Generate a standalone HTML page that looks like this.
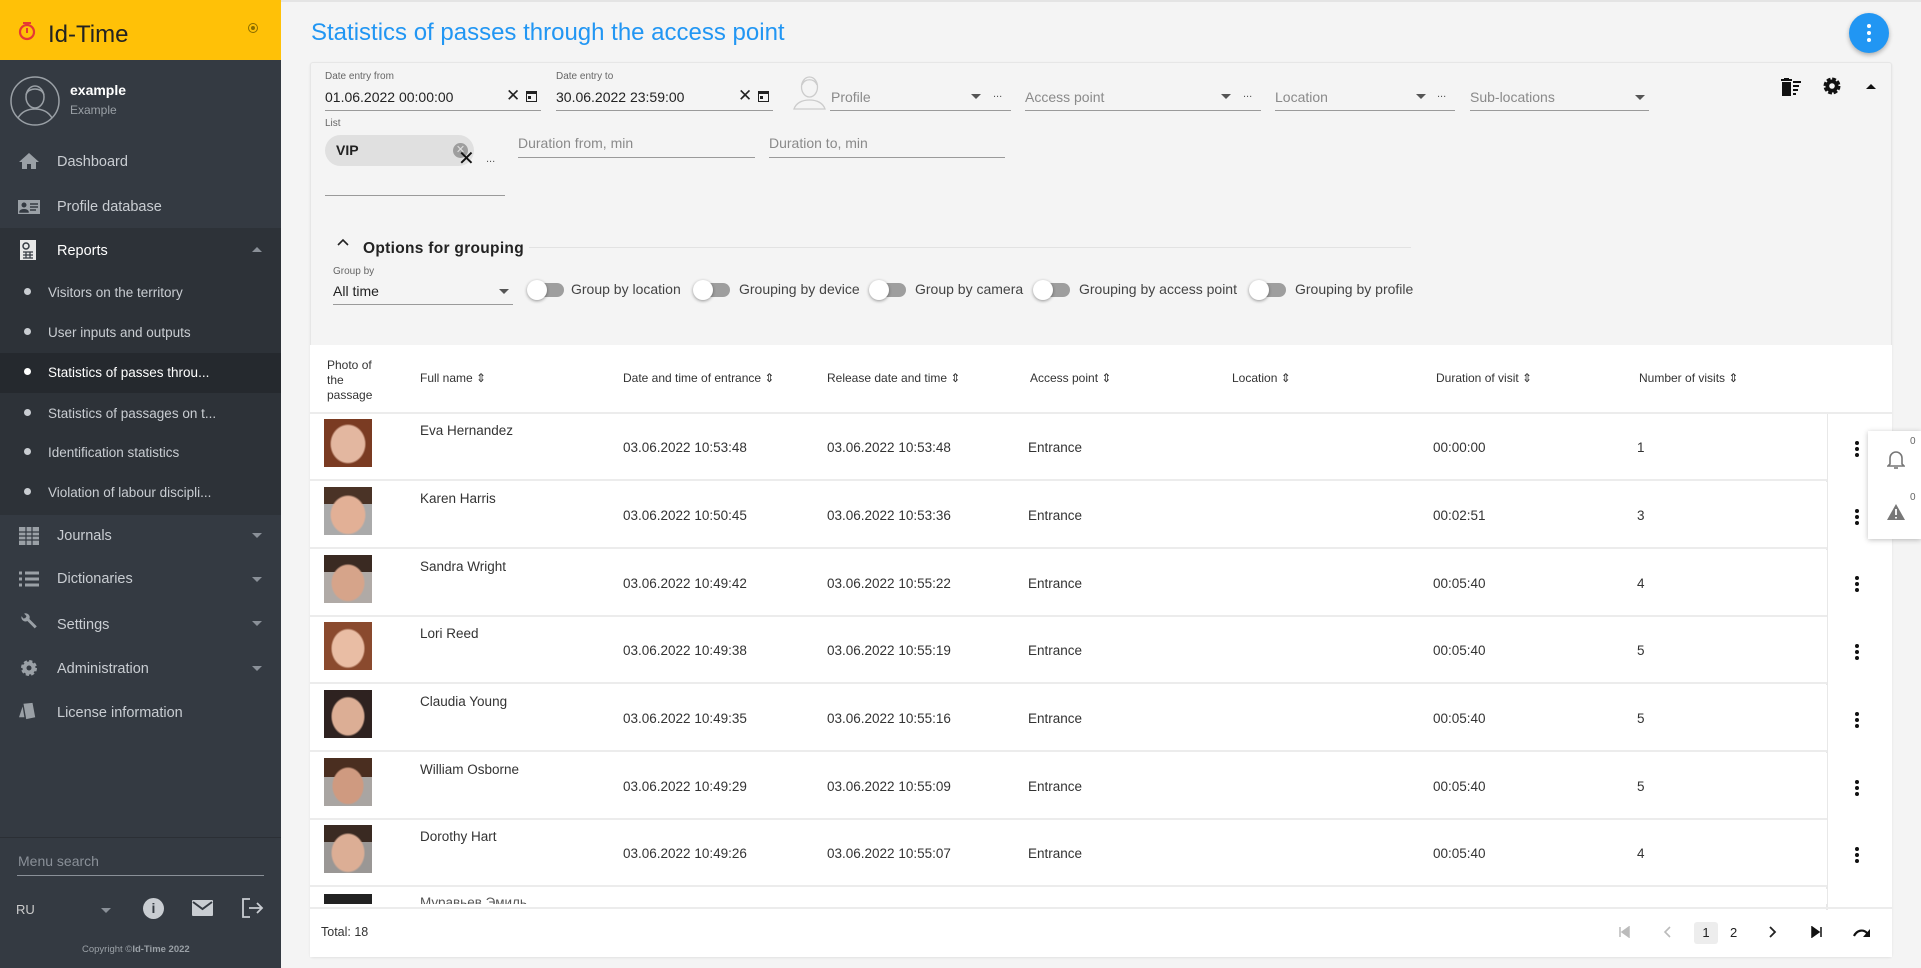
<!DOCTYPE html>
<html><head><meta charset="utf-8">
<style>
*{box-sizing:border-box;margin:0;padding:0}
body{width:1921px;height:968px;overflow:hidden;background:#f4f4f4;font-family:"Liberation Sans",Arial,sans-serif;position:relative;color:#333}
.a{position:absolute;white-space:nowrap}
#sb{position:absolute;left:0;top:0;width:281px;height:968px;background:#343a42}
.mi{position:absolute;left:57px;font-size:14.5px;color:#c9cdd2}
.si{position:absolute;left:48px;font-size:13.5px;color:#c9cdd2}
.dot{position:absolute;left:24px;width:7px;height:7px;border-radius:50%;background:#c9cdd2}
.car{position:absolute;left:252px;width:0;height:0;border-left:5px solid transparent;border-right:5px solid transparent;border-top:5px solid #8a9098}
.ic{position:absolute;left:18px;width:22px;height:18px}
.lbl{font-size:10px;color:#666}
.val{font-size:14px;color:#222}
.ph{font-size:14px;color:#8a8a8a}
.ul{position:absolute;height:1px;background:#9a9a9a}
.arr{position:absolute;width:0;height:0;border-left:5px solid transparent;border-right:5px solid transparent;border-top:5px solid #555}
.tg{position:absolute;width:34px;height:14px;border-radius:7px;background:#9e9e9e}
.tg:after{content:"";position:absolute;left:-3px;top:-3px;width:20px;height:20px;border-radius:50%;background:#fff;box-shadow:0 1px 3px rgba(0,0,0,.4)}
.tl{font-size:14px;color:#444}
.th{position:absolute;font-size:12px;color:#333;top:371px}
.row{position:absolute;left:310px;width:1517px;height:67px;border-bottom:2px solid #ececec;background:#fff}
.c{position:absolute;font-size:13.5px;color:#333}
.pic{position:absolute;left:14px;top:5px;width:48px;height:48px}
.kd{position:absolute;left:1855px;width:4px}
.kd i{display:block;width:4px;height:4px;border-radius:50%;background:#111;margin-bottom:2px}
</style></head><body>

<div id="sb">
 <div class="a" style="left:0;top:0;width:281px;height:60px;background:#ffc107"></div>
 <svg class="a" style="left:17px;top:20px" width="20" height="22" viewBox="0 0 20 22"><circle cx="10" cy="12" r="7" fill="none" stroke="#e53935" stroke-width="2.2"/><path d="M6 3h8M10 8v5" stroke="#e53935" stroke-width="2"/></svg>
 <div class="a" style="left:48px;top:21px;font-size:24px;color:#222">Id-Time</div>
 <div class="a" style="left:248px;top:23px;width:10px;height:10px;border-radius:50%;border:1.5px solid #8a6d00"></div>
 <div class="a" style="left:251px;top:26px;width:4px;height:4px;border-radius:50%;background:#8a6d00"></div>
 <svg class="a" style="left:9px;top:75px" width="52" height="52" viewBox="0 0 52 52"><circle cx="26" cy="26" r="24" fill="none" stroke="#9aa0a6" stroke-width="1.5"/><ellipse cx="26" cy="22" rx="9" ry="11" fill="none" stroke="#9aa0a6" stroke-width="1.5"/><path d="M17 20c2-8 16-8 18 0M9 43c4-7 10-9 17-9s13 2 17 9" fill="none" stroke="#9aa0a6" stroke-width="1.5"/></svg>
 <div class="a" style="left:70px;top:82px;font-size:14px;font-weight:bold;color:#fff">example</div>
 <div class="a" style="left:70px;top:103px;font-size:12px;color:#9aa0a6">Example</div>

 <svg class="ic" style="top:152px" viewBox="0 0 22 18"><path d="M11 1L1 10h3v7h5v-5h4v5h5v-7h3z" fill="#9aa0a6"/></svg>
 <div class="mi" style="top:154px">Dashboard</div>
 <svg class="ic" style="top:198px" viewBox="0 0 22 18"><rect x="0" y="2" width="22" height="14" fill="#9aa0a6"/><circle cx="6" cy="7" r="2.5" fill="#343a42"/><path d="M2 14c0-3 8-3 8 0zM12 6h8M12 9h8M12 12h6" stroke="#343a42" stroke-width="1.5" fill="#343a42"/></svg>
 <div class="mi" style="top:199px">Profile database</div>

 <div class="a" style="left:0;top:228px;width:281px;height:287px;background:#2d3238"></div>
 <div class="a" style="left:0;top:353px;width:281px;height:40px;background:#25292e"></div>
 <svg class="ic" style="top:240px;left:20px;width:16px;height:20px" viewBox="0 0 16 20"><rect x="0" y="0" width="16" height="20" fill="#e8e8e8"/><circle cx="6" cy="6" r="3" fill="none" stroke="#343a42" stroke-width="1.5"/><path d="M3 12h10M3 15h10M3 18h10M6 12v6M10 12v6" stroke="#343a42" stroke-width="1.2"/></svg>
 <div class="mi" style="top:243px;color:#fff">Reports</div>
 <div class="a" style="left:252px;top:247px;border-left:5px solid transparent;border-right:5px solid transparent;border-bottom:5px solid #8a9098"></div>
 <div class="dot" style="top:288px"></div><div class="si" style="top:285px">Visitors on the territory</div>
 <div class="dot" style="top:328px"></div><div class="si" style="top:325px">User inputs and outputs</div>
 <div class="dot" style="top:368px;background:#fff"></div><div class="si" style="top:365px;color:#fff">Statistics of passes throu...</div>
 <div class="dot" style="top:409px"></div><div class="si" style="top:406px">Statistics of passages on t...</div>
 <div class="dot" style="top:448px"></div><div class="si" style="top:445px">Identification statistics</div>
 <div class="dot" style="top:488px"></div><div class="si" style="top:485px">Violation of labour discipli...</div>

 <svg class="ic" style="top:527px;left:19px;width:20px" viewBox="0 0 20 18"><rect width="20" height="18" fill="#9aa0a6"/><path d="M0 5h20M0 9h20M0 13h20M7 0v18M13 0v18" stroke="#343a42" stroke-width="1.2"/></svg>
 <div class="mi" style="top:528px">Journals</div><div class="car" style="top:533px"></div>
 <svg class="ic" style="top:570px;left:19px;width:20px" viewBox="0 0 20 18"><path d="M0 3h3M6 3h14M0 9h3M6 9h14M0 15h3M6 15h14" stroke="#9aa0a6" stroke-width="3"/></svg>
 <div class="mi" style="top:571px">Dictionaries</div><div class="car" style="top:577px"></div>
 <svg class="ic" style="top:612px;left:18px" viewBox="0 0 22 22"><path d="M2 5a5 5 0 007 6l9 9 2.5-2.5-9-9A5 5 0 005 2l3 3-1.5 2.5L4 8z" fill="#9aa0a6"/></svg>
 <div class="mi" style="top:617px">Settings</div><div class="car" style="top:621px"></div>
 <svg class="ic" style="top:659px;left:20px;width:18px" viewBox="0 0 18 18"><circle cx="9" cy="9" r="6.5" fill="#9aa0a6" stroke="#9aa0a6" stroke-width="3" stroke-dasharray="3 2.1"/><circle cx="9" cy="9" r="2.5" fill="#343a42"/></svg>
 <div class="mi" style="top:661px">Administration</div><div class="car" style="top:666px"></div>
 <svg class="ic" style="top:702px;left:17px" viewBox="0 0 22 20"><path d="M6 2l10-1 3 16-10 2z" fill="#9aa0a6"/><path d="M1 17l4-12 2 12z" fill="#9aa0a6"/></svg>
 <div class="mi" style="top:705px">License information</div>

 <div class="a" style="left:0;top:837px;width:281px;height:1px;background:#2b2f35"></div>
 <div class="a" style="left:18px;top:853px;font-size:14px;color:#8a9098">Menu search</div>
 <div class="a" style="left:17px;top:875px;width:247px;height:1px;background:#8a9098"></div>
 <div class="a" style="left:16px;top:902px;font-size:13px;color:#ccc">RU</div>
 <div class="car" style="left:101px;top:908px"></div>
 <div class="a" style="left:143px;top:898px;width:21px;height:21px;border-radius:50%;background:#c9cdd2;color:#343a42;font-weight:bold;font-size:14px;text-align:center;line-height:21px">i</div>
 <svg class="a" style="left:192px;top:900px" width="21" height="16" viewBox="0 0 21 16"><rect width="21" height="16" rx="1" fill="#c9cdd2"/><path d="M1 2l9.5 7L20 2" stroke="#343a42" stroke-width="2" fill="none"/></svg>
 <svg class="a" style="left:242px;top:898px" width="22" height="20" viewBox="0 0 22 20"><path d="M8 1H1v18h7M7 10h13M15 5l5 5-5 5" stroke="#c9cdd2" stroke-width="1.8" fill="none"/></svg>
 <div class="a" style="left:82px;top:944px;font-size:9.5px;color:#9aa0a6">Copyright ©<b>Id-Time 2022</b></div>
</div>

<div class="a" style="left:281px;top:0;width:1640px;height:2px;background:#e4e4e4"></div>
<div class="a" style="left:311px;top:19px;font-size:24px;color:#2196f3">Statistics of passes through the access point</div>
<div class="a" style="left:1849px;top:13px;width:40px;height:40px;border-radius:50%;background:#2196f3;box-shadow:0 2px 5px rgba(0,0,0,.3)"></div>
<div class="a" style="left:1867px;top:24px;width:4px"><i style="display:block;width:4px;height:4px;border-radius:50%;background:#fff;margin-bottom:3px"></i><i style="display:block;width:4px;height:4px;border-radius:50%;background:#fff;margin-bottom:3px"></i><i style="display:block;width:4px;height:4px;border-radius:50%;background:#fff"></i></div>

<div class="a" style="left:310px;top:62px;width:1582px;height:895px;border:1px solid #e6e6e6;border-radius:3px;box-shadow:0 1px 2px rgba(0,0,0,.08)"></div>

<div class="a lbl" style="left:325px;top:71px">Date entry from</div>
<div class="a val" style="left:325px;top:89px">01.06.2022 00:00:00</div>
<div class="a" style="left:506px;top:86px;font-size:17px;color:#222">✕</div>
<svg class="a" style="left:526px;top:90px" width="11" height="12" viewBox="0 0 11 12"><rect x=".5" y="1.5" width="10" height="10" fill="none" stroke="#222"/><rect x="0" y="1" width="11" height="3" fill="#222"/><rect x="2" y="6" width="3" height="3" fill="#222"/></svg>
<div class="ul" style="left:325px;top:110px;width:216px"></div>
<div class="a lbl" style="left:556px;top:71px">Date entry to</div>
<div class="a val" style="left:556px;top:89px">30.06.2022 23:59:00</div>
<div class="a" style="left:738px;top:86px;font-size:17px;color:#222">✕</div>
<svg class="a" style="left:758px;top:90px" width="11" height="12" viewBox="0 0 11 12"><rect x=".5" y="1.5" width="10" height="10" fill="none" stroke="#222"/><rect x="0" y="1" width="11" height="3" fill="#222"/><rect x="2" y="6" width="3" height="3" fill="#222"/></svg>
<div class="ul" style="left:556px;top:110px;width:217px"></div>

<svg class="a" style="left:792px;top:74px" width="35" height="36" viewBox="0 0 35 36"><ellipse cx="17.5" cy="13" rx="8" ry="10" fill="none" stroke="#ccc" stroke-width="1.3"/><path d="M10 11c2-7 13-7 15 0M2 35c2-6 8-9 15.5-9S31 29 33 35z" fill="none" stroke="#ccc" stroke-width="1.3"/></svg>
<div class="a ph" style="left:831px;top:89px">Profile</div>
<div class="arr" style="left:971px;top:94px"></div>
<div class="a" style="left:993px;top:88px;font-size:11px;color:#555">...</div>
<div class="ul" style="left:830px;top:110px;width:181px"></div>
<div class="a ph" style="left:1025px;top:89px">Access point</div>
<div class="arr" style="left:1221px;top:94px"></div>
<div class="a" style="left:1243px;top:88px;font-size:11px;color:#555">...</div>
<div class="ul" style="left:1025px;top:110px;width:236px"></div>
<div class="a ph" style="left:1275px;top:89px">Location</div>
<div class="arr" style="left:1416px;top:94px"></div>
<div class="a" style="left:1437px;top:88px;font-size:11px;color:#555">...</div>
<div class="ul" style="left:1275px;top:110px;width:180px"></div>
<div class="a ph" style="left:1470px;top:89px">Sub-locations</div>
<div class="arr" style="left:1635px;top:95px"></div>
<div class="ul" style="left:1470px;top:110px;width:179px"></div>

<svg class="a" style="left:1781px;top:78px" width="20" height="18" viewBox="0 0 20 18"><rect x="1" y="4" width="9" height="14" fill="#111"/><rect x="0" y="1" width="11" height="2" fill="#111"/><rect x="3" y="0" width="5" height="2" fill="#111"/><path d="M12 4h8M12 8h6M12 12h5M12 16h3" stroke="#111" stroke-width="2"/></svg>
<svg class="a" style="left:1822px;top:76px" width="20" height="20" viewBox="0 0 20 20"><circle cx="10" cy="10" r="6.5" fill="#111" stroke="#111" stroke-width="4" stroke-dasharray="3.5 1.6"/><circle cx="10" cy="10" r="2.8" fill="#f4f4f4"/></svg>
<div class="a" style="left:1866px;top:84px;border-left:5px solid transparent;border-right:5px solid transparent;border-bottom:5px solid #111"></div>

<div class="a lbl" style="left:325px;top:118px">List</div>
<div class="a" style="left:325px;top:135px;width:149px;height:31px;border-radius:16px;background:#e0e0e0"></div>
<div class="a" style="left:336px;top:142px;font-size:14px;font-weight:bold;color:#222">VIP</div>
<div class="a" style="left:453px;top:143px;width:15px;height:15px;border-radius:50%;background:#9e9e9e;color:#e0e0e0;font-size:11px;text-align:center;line-height:15px">✕</div>
<div class="a" style="left:458px;top:146px;font-size:20px;color:#111">✕</div>
<div class="a" style="left:486px;top:153px;font-size:11px;color:#555">...</div>
<div class="ul" style="left:325px;top:195px;width:180px"></div>
<div class="a ph" style="left:518px;top:135px">Duration from, min</div>
<div class="ul" style="left:518px;top:157px;width:237px"></div>
<div class="a ph" style="left:769px;top:135px">Duration to, min</div>
<div class="ul" style="left:769px;top:157px;width:236px"></div>

<svg class="a" style="left:337px;top:238px" width="12" height="8" viewBox="0 0 12 8"><path d="M1 7l5-5 5 5" stroke="#222" stroke-width="1.6" fill="none"/></svg>
<div class="a" style="left:363px;top:240px;font-size:15.5px;font-weight:bold;color:#222;letter-spacing:.3px">Options for grouping</div>
<div class="a" style="left:529px;top:247px;width:882px;height:1px;background:#e2e2e2"></div>
<div class="a lbl" style="left:333px;top:266px">Group by</div>
<div class="a val" style="left:333px;top:283px">All time</div>
<div class="arr" style="left:499px;top:289px"></div>
<div class="ul" style="left:333px;top:304px;width:180px"></div>
<div class="tg" style="left:530px;top:283px"></div><div class="a tl" style="left:571px;top:281px">Group by location</div>
<div class="tg" style="left:696px;top:283px"></div><div class="a tl" style="left:739px;top:281px">Grouping by device</div>
<div class="tg" style="left:872px;top:283px"></div><div class="a tl" style="left:915px;top:281px">Group by camera</div>
<div class="tg" style="left:1036px;top:283px"></div><div class="a tl" style="left:1079px;top:281px">Grouping by access point</div>
<div class="tg" style="left:1252px;top:283px"></div><div class="a tl" style="left:1295px;top:281px">Grouping by profile</div>

<div class="a" style="left:310px;top:345px;width:1582px;height:612px;background:#fff"></div>
<div class="a" style="left:310px;top:412px;width:1582px;height:2px;background:#ececec"></div>
<div class="a" style="left:327px;top:358px;font-size:12px;color:#333;line-height:15px;white-space:normal;width:60px">Photo of the passage</div>
<div class="th" style="left:420px">Full name ⇕</div>
<div class="th" style="left:623px">Date and time of entrance ⇕</div>
<div class="th" style="left:827px">Release date and time ⇕</div>
<div class="th" style="left:1030px">Access point ⇕</div>
<div class="th" style="left:1232px">Location ⇕</div>
<div class="th" style="left:1436px">Duration of visit ⇕</div>
<div class="th" style="left:1639px">Number of visits ⇕</div>
<div class="a" style="left:1826px;top:414px;width:2px;height:496px;background:#e8e8e8"></div>

<div class="row" style="top:414px"><div class="pic" style="background:radial-gradient(ellipse 38% 42% at 50% 52%,#e3b7a0 90%,transparent 100%),#7a3b22"></div><div class="c" style="left:110px;top:9px">Eva Hernandez</div><div class="c" style="left:313px;top:26px">03.06.2022 10:53:48</div><div class="c" style="left:517px;top:26px">03.06.2022 10:53:48</div><div class="c" style="left:718px;top:26px">Entrance</div><div class="c" style="left:1123px;top:26px">00:00:00</div><div class="c" style="left:1327px;top:26px">1</div></div>
<div class="row" style="top:482px"><div class="pic" style="background:radial-gradient(ellipse 38% 42% at 50% 58%,#e2b096 90%,transparent 100%),linear-gradient(#4a3326 35%,#aaa 35%)"></div><div class="c" style="left:110px;top:9px">Karen Harris</div><div class="c" style="left:313px;top:26px">03.06.2022 10:50:45</div><div class="c" style="left:517px;top:26px">03.06.2022 10:53:36</div><div class="c" style="left:718px;top:26px">Entrance</div><div class="c" style="left:1123px;top:26px">00:02:51</div><div class="c" style="left:1327px;top:26px">3</div></div>
<div class="row" style="top:550px"><div class="pic" style="background:radial-gradient(ellipse 36% 40% at 50% 58%,#d6a48a 90%,transparent 100%),linear-gradient(#3a2a22 35%,#b0aaa6 35%)"></div><div class="c" style="left:110px;top:9px">Sandra Wright</div><div class="c" style="left:313px;top:26px">03.06.2022 10:49:42</div><div class="c" style="left:517px;top:26px">03.06.2022 10:55:22</div><div class="c" style="left:718px;top:26px">Entrance</div><div class="c" style="left:1123px;top:26px">00:05:40</div><div class="c" style="left:1327px;top:26px">4</div></div>
<div class="row" style="top:617px"><div class="pic" style="background:radial-gradient(ellipse 36% 42% at 50% 55%,#e9bda4 90%,transparent 100%),#8a4a2e"></div><div class="c" style="left:110px;top:9px">Lori Reed</div><div class="c" style="left:313px;top:26px">03.06.2022 10:49:38</div><div class="c" style="left:517px;top:26px">03.06.2022 10:55:19</div><div class="c" style="left:718px;top:26px">Entrance</div><div class="c" style="left:1123px;top:26px">00:05:40</div><div class="c" style="left:1327px;top:26px">5</div></div>
<div class="row" style="top:685px"><div class="pic" style="background:radial-gradient(ellipse 36% 42% at 50% 55%,#dcae95 90%,transparent 100%),#2e2220"></div><div class="c" style="left:110px;top:9px">Claudia Young</div><div class="c" style="left:313px;top:26px">03.06.2022 10:49:35</div><div class="c" style="left:517px;top:26px">03.06.2022 10:55:16</div><div class="c" style="left:718px;top:26px">Entrance</div><div class="c" style="left:1123px;top:26px">00:05:40</div><div class="c" style="left:1327px;top:26px">5</div></div>
<div class="row" style="top:753px"><div class="pic" style="background:radial-gradient(ellipse 34% 40% at 50% 58%,#cf9a80 90%,transparent 100%),linear-gradient(#4a2e20 40%,#a9a5a2 40%)"></div><div class="c" style="left:110px;top:9px">William Osborne</div><div class="c" style="left:313px;top:26px">03.06.2022 10:49:29</div><div class="c" style="left:517px;top:26px">03.06.2022 10:55:09</div><div class="c" style="left:718px;top:26px">Entrance</div><div class="c" style="left:1123px;top:26px">00:05:40</div><div class="c" style="left:1327px;top:26px">5</div></div>
<div class="row" style="top:820px"><div class="pic" style="background:radial-gradient(ellipse 36% 42% at 50% 58%,#dcae95 90%,transparent 100%),linear-gradient(#3a2a22 35%,#9a9795 35%)"></div><div class="c" style="left:110px;top:9px">Dorothy Hart</div><div class="c" style="left:313px;top:26px">03.06.2022 10:49:26</div><div class="c" style="left:517px;top:26px">03.06.2022 10:55:07</div><div class="c" style="left:718px;top:26px">Entrance</div><div class="c" style="left:1123px;top:26px">00:05:40</div><div class="c" style="left:1327px;top:26px">4</div></div>
<div class="a" style="left:310px;top:889px;width:1517px;height:15px;overflow:hidden;background:#fff"><div class="a" style="left:14px;top:5px;width:48px;height:13px;background:#222"></div><div class="c" style="left:110px;top:6px;color:#555">Муравьев Эмиль</div></div>
<div class="a" style="left:310px;top:907px;width:1582px;height:2px;background:#ececec"></div>

<div class="kd" style="top:441px"><i></i><i></i><i></i></div>
<div class="kd" style="top:509px"><i></i><i></i><i></i></div>
<div class="kd" style="top:576px"><i></i><i></i><i></i></div>
<div class="kd" style="top:644px"><i></i><i></i><i></i></div>
<div class="kd" style="top:712px"><i></i><i></i><i></i></div>
<div class="kd" style="top:780px"><i></i><i></i><i></i></div>
<div class="kd" style="top:847px"><i></i><i></i><i></i></div>

<div class="a" style="left:321px;top:925px;font-size:12.5px;color:#333">Total: 18</div>
<svg class="a" style="left:1618px;top:926px" width="12" height="12" viewBox="0 0 12 12"><path d="M2 1v10M11 1L4 6l7 5z" stroke="#bbb" fill="#bbb" stroke-width="1.5"/></svg>
<svg class="a" style="left:1663px;top:926px" width="8" height="12" viewBox="0 0 8 12"><path d="M7 1L2 6l5 5" stroke="#bbb" fill="none" stroke-width="1.6"/></svg>
<div class="a" style="left:1694px;top:922px;width:24px;height:22px;border-radius:3px;background:#ededed;font-size:13px;text-align:center;line-height:22px;color:#222">1</div>
<div class="a" style="left:1730px;top:922px;font-size:13px;line-height:22px;color:#222">2</div>
<svg class="a" style="left:1769px;top:926px" width="8" height="12" viewBox="0 0 8 12"><path d="M1 1l5 5-5 5" stroke="#222" fill="none" stroke-width="1.8"/></svg>
<svg class="a" style="left:1811px;top:926px" width="12" height="12" viewBox="0 0 12 12"><path d="M10 1v10M1 1l7 5-7 5z" stroke="#111" fill="#111" stroke-width="1.5"/></svg>
<svg class="a" style="left:1853px;top:926px" width="18" height="12" viewBox="0 0 18 12"><path d="M1 10c3-6 9-7 13-3" stroke="#111" fill="none" stroke-width="2.2"/><path d="M17 3v8h-7z" fill="#111"/></svg>

<div class="a" style="left:1868px;top:431px;width:53px;height:108px;background:#fff;box-shadow:0 1px 5px rgba(0,0,0,.25)"></div>
<div class="a" style="left:1910px;top:436px;font-size:10px;color:#666">0</div>
<svg class="a" style="left:1887px;top:450px" width="18" height="20" viewBox="0 0 18 20"><path d="M3 14V8a6 6 0 0112 0v6l2 2H1z" fill="none" stroke="#777" stroke-width="1.6"/><path d="M7 18h4" stroke="#777" stroke-width="1.6"/></svg>
<div class="a" style="left:1910px;top:492px;font-size:10px;color:#666">0</div>
<svg class="a" style="left:1886px;top:503px" width="20" height="18" viewBox="0 0 20 18"><path d="M10 1L19 17H1z" fill="#777"/><path d="M10 6v6M10 14v1.5" stroke="#fff" stroke-width="1.8"/></svg>
</body></html>
